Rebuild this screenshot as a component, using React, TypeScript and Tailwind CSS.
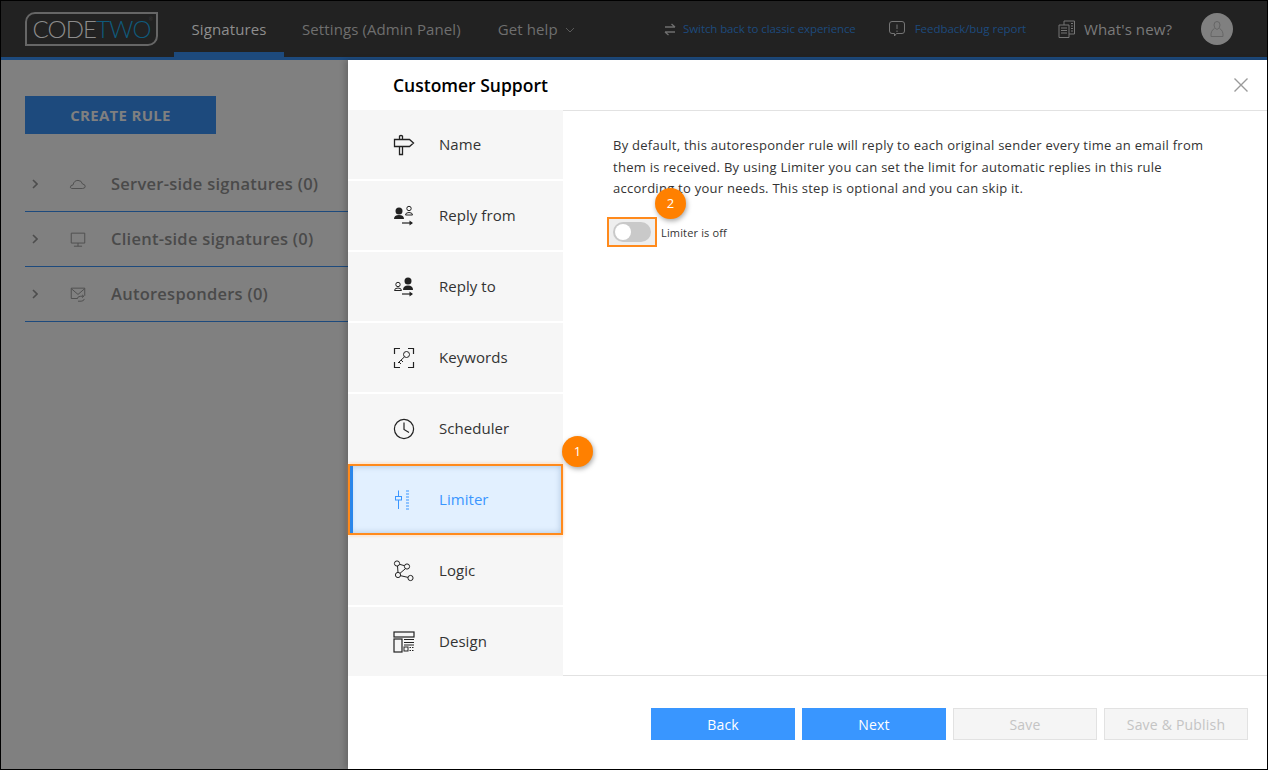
import React from "react";

const S = ({ children, w = 24, h = 24, cls = "" }: { children: React.ReactNode; w?: number; h?: number; cls?: string }) => (
  <svg width={w} height={h} viewBox={`0 0 ${w} ${h}`} fill="none" stroke="currentColor" strokeWidth={1} className={cls}>
    {children}
  </svg>
);

const NameIcon = () => (
  <S w={22} h={22}><path d="M1.500 5.500H16.500L20.500 9L16.500 12.500H1.500Z M6.500 5.500V2Q8 1 9.500 2V5.500 M6.500 12.500V20.500H9.500V12.500" strokeWidth={1.300} /></S>
);
const ReplyFrom = () => (
  <S w={22} h={22}>
    <circle cx="6" cy="6" r="3.500" fill="currentColor" stroke="none" />
    <path d="M1 14 Q1 10 6 10 Q11 10 11 14Z" fill="currentColor" stroke="none" />
    <circle cx="16" cy="3.500" r="2.200" /><path d="M12.500 10 Q12.500 7.500 16 7.500 Q19.500 7.500 19.500 10Z" />
    <path d="M9 18H19" strokeWidth={1.200} /><path d="M16.500 15.500L20 18L16.500 20.500Z" fill="currentColor" stroke="none" />
  </S>
);
const ReplyTo = () => (
  <S w={22} h={22}>
    <circle cx="15" cy="5" r="3.500" fill="currentColor" stroke="none" />
    <path d="M10 14 Q10 9.500 15 9.500 Q20 9.500 20 14Z" fill="currentColor" stroke="none" />
    <circle cx="5" cy="8.500" r="2.200" /><path d="M1.500 14.500 Q1.500 12 5 12 Q8.500 12 8.500 14.500Z" />
    <path d="M9 18H19" strokeWidth={1.200} /><path d="M16.500 15.500L20 18L16.500 20.500Z" fill="currentColor" stroke="none" />
  </S>
);
const KeywordsIcon = () => (
  <S w={22} h={22}>
    <path d="M7 1.500H1.500V7 M15 1.500H20.500V7 M7 20.500H1.500V15 M15 20.500H20.500V15" strokeWidth={1.200} />
    <circle cx="13.500" cy="7.500" r="3" /><path d="M11.500 9.800L5 16 M6 15L8 17 M8 13L10 15" />
  </S>
);
const ClockIcon = () => (
  <S w={22} h={22}><circle cx="11" cy="11" r="9.600" strokeWidth={1.200} /><path d="M11 4.500V11.500L16 14.500" strokeWidth={1.200} /></S>
);
const LimiterIcon = () => (
  <S w={22} h={22}>
    <path d="M5.500 1.500V20" /><rect x="2.500" y="7.500" width="6" height="3.500" fill="#e2f0ff" />
    <path d="M13 2H16 M13 5H16 M13 8H16 M13 11H16 M13 14H16 M13 17H16 M13 20H16" />
  </S>
);
const LogicIcon = () => (
  <S w={22} h={22}>
    <circle cx="4" cy="3.500" r="2.600" /><circle cx="14" cy="6.500" r="2.600" /><circle cx="5" cy="15" r="2.600" /><circle cx="17.500" cy="18" r="2.600" />
    <path d="M6.500 4.300L11.500 5.700 M4.500 6L5 12.400 M12.500 8.600L7 13.300 M7.600 15.700L15 17.400" />
  </S>
);
const DesignIcon = () => (
  <S w={22} h={22}>
    <rect x="1" y="1" width="20" height="5" strokeWidth={1.200} /><rect x="1" y="8" width="8" height="13" strokeWidth={1.200} />
    <path d="M11 8.500H21 M11 11.500H21 M11 14H21" /><rect x="11" y="16" width="4" height="4" />
    <path d="M16.500 19.500H21 M16.500 16.500H21" strokeDasharray="1.500 1" />
  </S>
);

const items: [string, React.ReactNode][] = [
  ["Name", <NameIcon />],
  ["Reply from", <ReplyFrom />],
  ["Reply to", <ReplyTo />],
  ["Keywords", <KeywordsIcon />],
  ["Scheduler", <ClockIcon />],
  ["Limiter", <LimiterIcon />],
  ["Logic", <LogicIcon />],
  ["Design", <DesignIcon />],
];

const rows: [string, React.ReactNode][] = [
  ["Server-side signatures (0)", <path d="M1.500 14Q1.500 11 4.500 11Q5.500 6 10 6Q14 6 15 10Q18 10.500 18 12.500Q18 15 15 15H3Z" />],
  ["Client-side signatures (0)", <path d="M2.500 3.500H17.500V14.500H2.500Z M10 14.500V18 M5.500 18H14.500" />],
  ["Autoresponders (0)", <path d="M9 15H2.500V3.500H17.500V12 M2.500 4L10 10.500L17.500 4 M9 15.500Q9.500 12.500 13 12.500H16 M14.500 11L16.500 12.500L14.500 14 M17 15.500Q16.500 18 13.500 18H10" />],
];

export default function App() {
  return (
    <div className="w-[1268px] h-[770px] flex flex-col border border-black overflow-hidden font-['Open_Sans','Noto_Sans',sans-serif] relative">
      <header className="h-[56px] shrink-0 bg-[#222222] flex items-center">
        <div className="ml-[24px] w-[133px] h-[34px] border-2 border-[#666666] rounded-tl-[10px] rounded-br-[10px] flex items-center justify-center text-[24px] font-['Lato',sans-serif] font-light tracking-[-0.9px] leading-none relative">
          <span className="text-[#8c8c8c]">CODE</span><span className="text-[#0f5a7c]">TWO</span>
          <span className="text-[#555555] text-[5px] tracking-normal absolute right-[3px] top-[3px]">®</span>
        </div>
        <nav className="ml-[16px] flex h-full items-stretch text-[15px] tracking-[0.1px]">
          <div className="w-[110px] flex items-center justify-center text-[#8e8e8e] border-b-[5px] border-[#1d4a7d] pt-[5px]">Signatures</div>
          <div className="ml-[18px] flex items-center text-[#6f6f6f]">Settings (Admin Panel)</div>
          <div className="ml-[37px] flex items-center text-[#6f6f6f]">Get help
            <svg width="10" height="6" viewBox="0 0 10 6" fill="none" stroke="#5a5a5a" className="ml-[7px] mt-[2px]"><path d="M1 1L5 5L9 1" /></svg>
          </div>
        </nav>
        <div className="ml-auto flex items-center">
          <svg width="12" height="13" viewBox="0 0 12 13" fill="none" stroke="#6f6f6f" strokeWidth={1.300}><path d="M1 4H11 M7.500 1L11 4 M11 9H1 M4.500 12L1 9" /></svg>
          <span className="ml-[7px] text-[#1d4a7d] text-[11.500px] tracking-[-0.1px]">Switch back to classic experience</span>
          <svg className="ml-[32px]" width="18" height="18" viewBox="0 0 18 18" fill="none" stroke="#757575"><path d="M4 1.500H14Q16.500 1.500 16.500 4V11Q16.500 13.500 14 13.500H8.500L6.500 16V13.500H4Q1.500 13.500 1.500 11V4Q1.500 1.500 4 1.500Z M9 4.500V9 M9 10.500V12" /></svg>
          <span className="ml-[9px] text-[#1d4a7d] text-[11.500px] tracking-[-0.05px]">Feedback/bug report</span>
          <svg className="ml-[32px]" width="18" height="18" viewBox="0 0 18 18" fill="none" stroke="#757575"><path d="M1 5H11V17.500H1Z M6 5V1H16.500V14H11 M3 8H9 M3 10.500H9 M3 13H9 M13 3.500H15 M13 6H15 M13 8.500H15 M13 11H15" /></svg>
          <span className="ml-[8px] text-[#7a7a7a] text-[15px] tracking-[0.1px]">What's new?</span>
          <div className="ml-[29px] mr-[34px] w-[32px] h-[32px] rounded-full bg-[#808080] flex items-center justify-center">
            <svg width="14" height="18" viewBox="0 0 14 18" fill="none" stroke="#666666"><path d="M7 1.500Q10 1.500 10 5Q10 8.500 7 9.500Q4 8.500 4 5Q4 1.500 7 1.500Z M4.500 8.500Q0.500 10.500 1 16.500H13Q13.500 10.500 9.500 8.500" /></svg>
          </div>
        </div>
      </header>
      <div className="h-[3px] shrink-0 bg-[#1d4a7d]" />
      <div className="flex flex-1 min-h-0">
        <aside className="w-[347px] shrink-0 bg-[#808080] pl-[24px] pt-[36px]">
          <div className="w-[191px] h-[38px] bg-[#1d4a7d] flex items-center justify-center text-[#808080] text-[15px] font-bold tracking-[0.3px]">CREATE RULE</div>
          <div className="mt-[23px]">
            {rows.map(([t, ic]) => (
              <div key={t} className="h-[55px] border-b border-[#1d4a7d] flex items-center text-[#4a4a4a]">
                <svg width="6" height="10" viewBox="0 0 6 10" fill="none" stroke="#4d4d4d" strokeWidth={1.600} className="ml-[7px]"><path d="M1 1L5 5L1 9" /></svg>
                <svg width="18" height="18" viewBox="0 0 20 20" fill="none" stroke="#505050" strokeWidth={1.100} className="ml-[31px]">{ic}</svg>
                <span className="ml-[24px] text-[16.500px] font-semibold tracking-[0.25px]">{t}</span>
              </div>
            ))}
          </div>
        </aside>
        <main className="flex-1 min-w-0 bg-white flex flex-col shadow-[-3px_0_6px_rgba(0,0,0,0.2)] relative">
          <div className="h-[50px] shrink-0 flex items-center relative">
            <h1 className="ml-[45px] text-[17.500px] font-semibold text-black">Customer Support</h1>
            <svg className="ml-auto mr-[18px]" width="16" height="16" viewBox="0 0 16 16" fill="none" stroke="#9a9a9a" strokeWidth={1.400}><path d="M1.500 1.500L14.500 14.500 M14.500 1.500L1.500 14.500" /></svg>
          </div>
          <div className="flex h-[566px] shrink-0">
            <ul className="w-[215px] shrink-0 flex flex-col gap-[2px]">
              {items.map(([t, ic]) =>
                t === "Limiter" ? (
                  <li key={t} className="h-[71px] -my-[1px] relative z-10 bg-[#e2f0ff] border-2 border-[#ff8a1c] flex items-center text-[#3a96ff] shadow-[inset_0_0_6px_rgba(0,60,120,0.25),0_0_3px_rgba(255,138,28,0.5)]">
                    <span className="w-[3px] h-full bg-[#2a86ea]" />
                    <span className="ml-[40px] w-[22px] h-[22px]">{ic}</span>
                    <span className="ml-[24px] text-[15px] tracking-[0.05px]">{t}</span>
                  </li>
                ) : (
                  <li key={t} className="h-[69px] bg-[#f6f6f6] flex items-center text-[#222222]">
                    <span className="ml-[45px] w-[22px] h-[22px]">{ic}</span>
                    <span className="ml-[24px] text-[15px] text-[#333333] tracking-[0.05px]">{t}</span>
                  </li>
                )
              )}
            </ul>
            <section className="flex-1 min-w-0 border-t border-b border-[#e2e2e2] pl-[50px] pt-[24px] relative">
              <p className="w-[600px] text-[13px] leading-[21.500px] text-[#333333] tracking-[0.265px]">
                By default, this autoresponder rule will reply to each original sender every time an email from them is received. By using Limiter you can set the limit for automatic replies in this rule according to your needs. This step is optional and you can skip it.
              </p>
              <div className="mt-[17px] -ml-[6px] flex items-center">
                <div className="w-[50px] h-[30px] border-2 border-[#ff8a1c] bg-[#eeeeee] flex items-center justify-center">
                  <div className="w-[38px] h-[20px] rounded-full bg-[#c9c9c9] flex items-center pl-[2px]">
                    <div className="w-[16px] h-[16px] rounded-full bg-white" />
                  </div>
                </div>
                <span className="ml-[4px] mt-[3px] text-[11px] text-[#333333] tracking-[0.15px]">Limiter is off</span>
              </div>
              <div className="absolute left-[92px] top-[77px] w-[31px] h-[31px] rounded-full bg-[#ff8000] text-white text-[13px] flex items-center justify-center shadow-[1px_2px_5px_rgba(0,0,0,0.35)]">2</div>
            </section>
          </div>
          <div className="absolute left-[214px] top-[376px] w-[31px] h-[31px] rounded-full bg-[#ff8000] text-white text-[13px] flex items-center justify-center shadow-[1px_2px_5px_rgba(0,0,0,0.35)] z-20">1</div>
          <footer className="flex-1 flex items-start justify-end gap-[7px] pt-[32px] pr-[19px] text-[14px] tracking-[0.2px]">
            <button className="w-[144px] h-[32px] bg-[#3996ff] text-white">Back</button>
            <button className="w-[144px] h-[32px] bg-[#3996ff] text-white">Next</button>
            <button className="w-[144px] h-[32px] bg-[#f5f5f5] border border-[#e2e2e2] text-[#c4c4c4]">Save</button>
            <button className="w-[144px] h-[32px] bg-[#f5f5f5] border border-[#e2e2e2] text-[#c4c4c4]">Save &amp; Publish</button>
          </footer>
        </main>
      </div>
    </div>
  );
}
